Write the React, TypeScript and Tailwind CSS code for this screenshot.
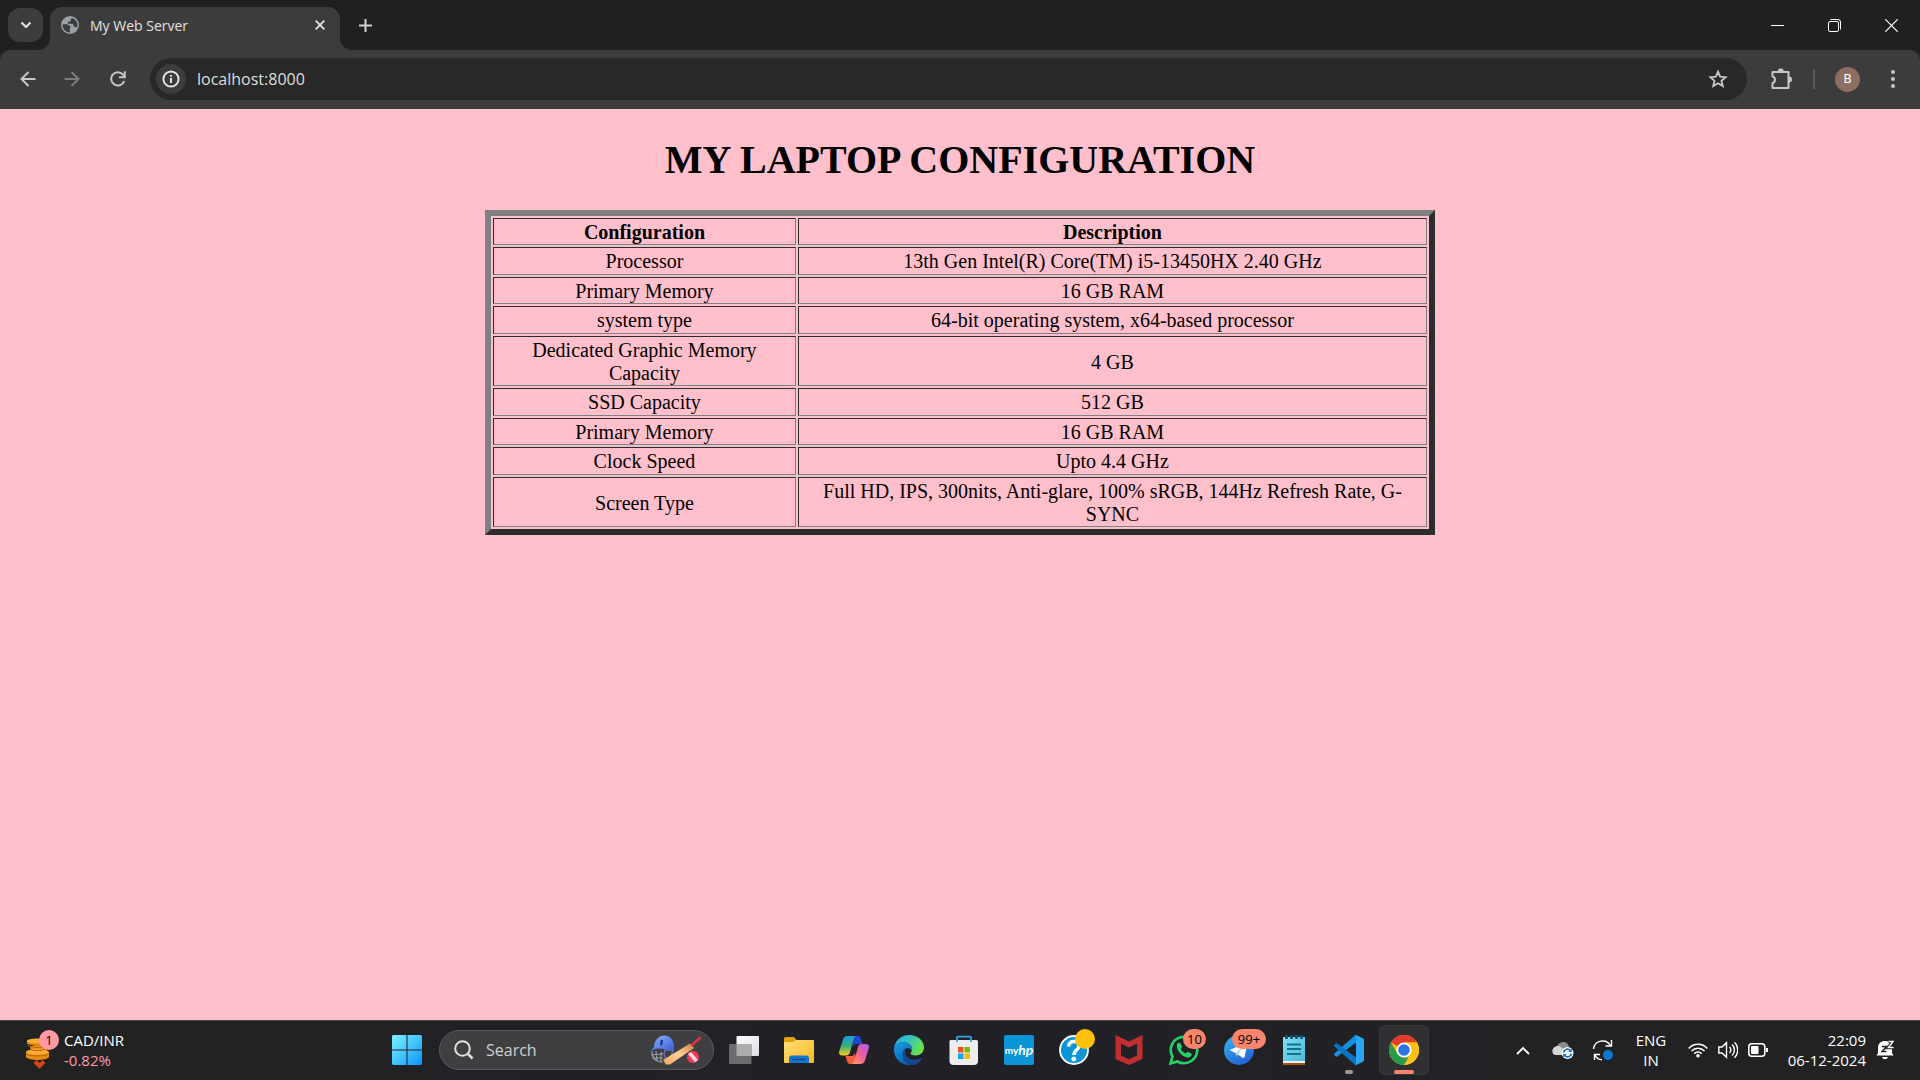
import type { ReactNode } from "react";

const rows = [
  { name: "Processor", value: "13th Gen Intel(R) Core(TM) i5-13450HX 2.40 GHz", tall: true },
  { name: "Primary Memory", value: "16 GB RAM", tall: false },
  { name: "system type", value: "64-bit operating system, x64-based processor", tall: true },
  { name: "Dedicated Graphic Memory Capacity", value: "4 GB", tall: false },
  { name: "SSD Capacity", value: "512 GB", tall: true },
  { name: "Primary Memory", value: "16 GB RAM", tall: false },
  { name: "Clock Speed", value: "Upto 4.4 GHz", tall: true },
  { name: "Screen Type", value: "Full HD, IPS, 300nits, Anti-glare, 100% sRGB, 144Hz Refresh Rate, G-SYNC", tall: false },
];

const cellBorder = "border border-t-[#2c2c2c] border-l-[#2c2c2c] border-r-[#808080] border-b-[#808080] px-[2px]";
const shortCell = `${cellBorder} pt-[2px]`;
const tallCell = `${cellBorder} py-px`;

function TabStrip() {
  return (
    <div className="flex h-[50px] items-start bg-[#1f2020] pl-2">
      <button aria-label="Search tabs" className="mt-2 flex h-[34px] w-[35px] items-center justify-center rounded-xl bg-[#3c3c3c]">
        <svg width="12" height="8" viewBox="0 0 12 8" fill="none" stroke="#e3e3e3" strokeWidth="2">
          <path d="M1.5 1.5 6 6l4.5-4.5" />
        </svg>
      </button>
      <div className="relative ml-[7px] flex h-[43px] w-[290px] items-start self-end rounded-t-xl bg-[#3c3c3c] px-[11px] pt-[9px]">
        <svg className="absolute bottom-0 -left-3" width="12" height="12" viewBox="0 0 12 12">
          <path d="M12 0v12H0A12 12 0 0 0 12 0z" fill="#3c3c3c" />
        </svg>
        <svg className="absolute -right-3 bottom-0" width="12" height="12" viewBox="0 0 12 12">
          <path d="M0 0v12h12A12 12 0 0 1 0 0z" fill="#3c3c3c" />
        </svg>
        <svg width="18" height="18" viewBox="0 0 18 18">
          <circle cx="9" cy="9" r="9" fill="#9aa0a6" />
          <path d="M11 1.9 9.8 3.2c-.3.4-.2.8 0 1.2.2.5-.1 1-.7 1.1l-1.6.2c-.5.1-.8.5-.8 1 0 .6.4 1 1 1h3c1.4 0 2 1 2 2v1.1h1.4c.8 0 1.5.4 1.800 1.100A7.500 7.500 0 0 0 11 1.900z" fill="#3c3c3c" />
          <path d="M1.500 8.200h4.700l3.200 2c.5.4.4 1.800-.6 1.800v3l.6 1.500A7.500 7.500 0 0 1 1.500 8.200z" fill="#3c3c3c" />
        </svg>
        <span className="ml-[11px] grow text-sm leading-5 text-[#e3e3e3]">My Web Server</span>
        <button aria-label="Close tab" className="flex size-[18px] items-center justify-center">
          <svg width="10" height="10" viewBox="0 0 10 10" stroke="#e3e3e3" strokeWidth="1.8">
            <path d="m.7.7 8.600 8.600M9.300.7.7 9.300" />
          </svg>
        </button>
      </div>
      <button aria-label="New tab" className="ml-[7px] flex h-[50px] w-9 items-center justify-center">
        <svg width="13" height="13" viewBox="0 0 13 13" stroke="#d0d0d0" strokeWidth="2">
          <path d="M6.500 0v13M0 6.500h13" />
        </svg>
      </button>
      <div className="ml-auto flex h-[50px]">
        <button aria-label="Minimize" className="flex w-[57px] items-center justify-center">
          <svg width="13" height="13" viewBox="0 0 13 13" stroke="#fff"><path d="M0 6.500h13" /></svg>
        </button>
        <button aria-label="Restore" className="flex w-[57px] items-center justify-center">
          <svg width="13" height="13" viewBox="0 0 13 13" fill="none" stroke="#fff">
            <rect x=".5" y="2.500" width="10" height="10" rx="1.500" />
            <path d="M2.500.5H10A2.500 2.500 0 0 1 12.500 3v7.500" />
          </svg>
        </button>
        <button aria-label="Close" className="flex w-[57px] items-center justify-center">
          <svg width="13" height="13" viewBox="0 0 13 13" stroke="#fff" strokeWidth="1.2"><path d="m.3.3 12.400 12.400M12.700.3.3 12.700" /></svg>
        </button>
      </div>
    </div>
  );
}

function Toolbar() {
  return (
    <div className="bg-[#1f2020]">
      <div className="flex h-[59px] items-center rounded-t-[10px] bg-[#3c3c3c] pr-[17px] pb-px pl-[6px]">
        <button aria-label="Back" className="flex w-11 justify-center">
          <svg width="16" height="16" viewBox="0 0 16 16" fill="none" stroke="#c7c7c7" strokeWidth="2"><path d="M15.500 8H2M8.500 1 1.500 8l7 7" /></svg>
        </button>
        <button aria-label="Forward" className="flex w-11 justify-center">
          <svg width="16" height="16" viewBox="0 0 16 16" fill="none" stroke="#7c7c7c" strokeWidth="2"><path d="M.5 8H14M7.500 1l7 7-7 7" /></svg>
        </button>
        <button aria-label="Reload" className="flex w-[47px] justify-center">
          <svg width="16" height="16" viewBox="0 0 16 16" fill="none" stroke="#c7c7c7" strokeWidth="2">
            <path d="M14.200 10.200A6.700 6.700 0 1 1 12.900 3.400L14.500 5.500" />
            <path d="M14.800.3v6H9" />
          </svg>
        </button>
        <div className="ml-[9px] flex h-[42px] grow items-center rounded-full bg-[#282828] pr-[18px] pl-[6px]">
          <button aria-label="View site information" className="flex size-[30px] items-center justify-center rounded-full bg-[#3c3c3c]">
            <svg width="18" height="18" viewBox="0 0 18 18" fill="none" stroke="#e3e3e3" strokeWidth="2">
              <circle cx="9" cy="9" r="7.600" />
              <path d="M9 8v5M9 5v1.800" />
            </svg>
          </button>
          <input aria-label="Address" defaultValue="localhost:8000" className="ml-[11px] h-8 min-w-0 grow bg-transparent text-base text-[#dedede] outline-none" />
          <button aria-label="Bookmark this tab">
            <svg width="22" height="22" viewBox="0 0 24 24" fill="none" stroke="#c7c7c7" strokeWidth="2">
              <path d="m12 4 2.300 5.500 6 .5-4.500 3.900 1.400 5.800-5.200-3.100-5.200 3.100 1.400-5.800L3.700 10l6-.5z" />
            </svg>
          </button>
        </div>
        <button aria-label="Extensions" className="ml-[22px]">
          <svg width="24" height="24" viewBox="0 0 24 24" fill="none">
            <path d="M4 5h15.500v16H3.500v-4.800c3.300-1.200 3.300-5.700 0-6.900V5z" stroke="#c7c7c7" strokeWidth="2" strokeLinejoin="round" />
            <path d="M9 4.500a2.700 2.700 0 0 1 5.400 0zM20 9.800a2.700 2.700 0 0 1 0 5.400z" fill="#c7c7c7" stroke="#c7c7c7" />
          </svg>
        </button>
        <div className="ml-5 h-5 w-[2px] bg-[#5c5c5c]" />
        <button aria-label="Profile" className="ml-5 flex size-[25px] items-center justify-center rounded-full bg-[#8d6e63] font-['Roboto'] text-[13px] text-white">B</button>
        <button aria-label="Menu" className="ml-[22px] flex w-[21px] justify-center">
          <svg width="4" height="18" viewBox="0 0 4 18" fill="#c7c7c7">
            <circle cx="2" cy="2" r="2" /><circle cx="2" cy="9" r="2" /><circle cx="2" cy="16" r="2" />
          </svg>
        </button>
      </div>
    </div>
  );
}

function ConfigPage() {
  return (
    <main className="grow bg-[#ffc0cb] px-[10px] font-['Liberation_Serif',serif] text-xl leading-[23px] text-black">
      <h1 className="pt-7 text-center text-[40px] leading-[46px] font-bold">MY LAPTOP CONFIGURATION</h1>
      <table className="mx-auto mt-[27px] w-1/2 table-fixed border-separate border-spacing-[2px] border-[6px] border-t-[#808080] border-r-[#2c2c2c] border-b-[#2c2c2c] border-l-[#808080] text-center">
        <thead>
          <tr>
            <th className={`${shortCell} w-[32.5%]`}>Configuration</th>
            <th className={shortCell}>Description</th>
          </tr>
        </thead>
        <tbody>
          {rows.map((row, i) => (
            <tr key={i} className={row.tall ? "h-7" : "h-[27px]"}>
              <td className={row.tall ? tallCell : shortCell}>{row.name}</td>
              <td className={row.tall ? tallCell : shortCell}>{row.value}</td>
            </tr>
          ))}
        </tbody>
      </table>
    </main>
  );
}

function TaskButton({ label, children, badge, active, dot }: { label: string; children: ReactNode; badge?: ReactNode; active?: boolean; dot?: boolean }) {
  return (
    <button
      aria-label={label}
      className={`relative flex size-[50px] shrink-0 items-center justify-center rounded-md border ${active ? "border-[#39393c] bg-[#303033]" : "border-transparent"}`}
    >
      {children}
      {badge}
      {dot && <span className="absolute bottom-0 h-1 w-2 rounded-full bg-[#9a9a9a]" />}
      {active && <span className="absolute bottom-0 h-1 w-5 rounded-full bg-[#f7856c]" />}
    </button>
  );
}

function CricketArt() {
  return (
    <svg width="52" height="32" viewBox="0 0 52 32" fill="none">
      <defs>
        <linearGradient id="helmet" x1="0" y1="0" x2="1" y2="1"><stop stopColor="#8ab0fa" /><stop offset="1" stopColor="#3a5bd8" /></linearGradient>
        <linearGradient id="bat" x1="0" y1="1" x2="1" y2="0"><stop stopColor="#f4a556" /><stop offset=".5" stopColor="#ffd09a" /><stop offset="1" stopColor="#d08040" /></linearGradient>
      </defs>
      <path d="M3 17c0 7 4 11 11 11M2 21l12-1M3 24l11 0M7 17l1 10M12 18v9" stroke="#9a9ca8" strokeWidth="1.2" />
      <path d="M16 16h8l-2 7-5 3-2-6z" stroke="#6a70b8" strokeWidth="1.5" />
      <path d="M5 14C5 6 10 1 16 1.500c6 .5 10 6 9 14h-9c-4-1.500-9-1.500-13 1-1 0-.5-2 2-2.500z" fill="url(#helmet)" />
      <path d="m13 6-1 5" stroke="#1b2b6b" strokeWidth="2" />
      <path d="M41 9.500 45 14 21 30.500l-4 0L14 26z" fill="url(#bat)" />
      <path d="m43 11 8-7" stroke="#e0304a" strokeWidth="2.5" strokeLinecap="round" />
      <circle cx="44" cy="23" r="6" fill="#f23a5a" />
      <path d="m39 20 7 8 3-2-7-8z" fill="#ffd9dc" />
    </svg>
  );
}

function Taskbar() {
  return (
    <footer className="flex h-[60px] shrink-0 items-center border-t border-[#454547] bg-linear-to-r from-[#222222] via-[#212027] to-[#222222] pb-px text-white">
      <button className="flex w-[380px] shrink-0 items-center pl-[25px] text-left">
        <span className="relative h-[38px] w-[34px] shrink-0">
          <svg width="34" height="38" viewBox="0 0 34 38">
            <path d="M2 9.500h20v6H12L2 13z" fill="#e08410" />
            <ellipse cx="12" cy="10" rx="10" ry="2.500" fill="#ffae38" />
            <path d="M5 15h17v4c-5 2.500-12 2.500-16 0z" fill="#ee9318" />
            <path d="M1 21h23v5c-2 4-21 4-23 0z" fill="#e68a12" />
            <ellipse cx="12.500" cy="21" rx="11.500" ry="2.800" fill="#ffac30" />
            <path d="M3 14.500c5 2.500 13 2.500 18 1M5 18.500c5 1.500 11 1.500 16-.5M1.500 23c4 2.500 18 2.500 22 0" stroke="#b8650a" fill="none" />
            <path d="M10 30.500 14.500 35l4.500-4.500" stroke="#d64518" strokeWidth="4" fill="none" />
          </svg>
          <span className="absolute -top-px left-[14px] flex size-5 items-center justify-center rounded-full bg-[#ff99a4] text-[13px] leading-5 text-black">1</span>
        </span>
        <span className="ml-[5px] flex flex-col text-[15px] leading-5">
          <span>CAD/INR</span>
          <span className="text-[#ff99a4]">-0.82%</span>
        </span>
      </button>

      <div className="flex items-center gap-[5px]">
        <button aria-label="Start" className="flex w-[54px] justify-center">
          <svg width="30" height="30" viewBox="0 0 29 29">
            <defs><linearGradient id="win" gradientUnits="userSpaceOnUse" x1="0" y1="0" x2="29" y2="29"><stop stopColor="#7df3ff" /><stop offset="1" stopColor="#0a95fb" /></linearGradient></defs>
            <path d="M1 0h13v14H0V1zM15 0h13l1 1v13H15zM0 15h14v14H1l-1-1zM15 15h14v13l-1 1H15z" fill="url(#win)" />
          </svg>
        </button>
        <label className="flex h-10 w-[275px] items-center rounded-full border border-[#58585b] bg-[#3f3f42] pr-[12px] pl-[14px]">
          <svg className="shrink-0" width="20" height="20" viewBox="0 0 20 20" fill="none" stroke="#e0e0e0" strokeWidth="2">
            <circle cx="8.500" cy="8.500" r="7.300" />
            <path d="m14 14 4.500 4.500" strokeWidth="2.5" />
          </svg>
          <input placeholder="Search" aria-label="Search" className="ml-3 min-w-0 grow bg-transparent text-base text-[#cfcfcf] outline-none placeholder:text-[#cfcfcf]" />
          <span className="shrink-0"><CricketArt /></span>
        </label>
        <TaskButton label="Task view">
          <svg width="30" height="30" viewBox="0 0 30 30">
            <defs><linearGradient id="tv" x1="0" y1="0" x2="1" y2="1"><stop stopColor="#fff" /><stop offset="1" stopColor="#dcdcdc" /></linearGradient></defs>
            <rect x="7.500" y="1" width="22.500" height="20" rx="1" fill="url(#tv)" />
            <rect x="0" y="9" width="22.500" height="20" rx="1" fill="#6c6c6c" />
            <path d="M7.500 9h15v12h-15z" fill="#adadad" />
          </svg>
        </TaskButton>
        <TaskButton label="File Explorer">
          <svg width="30" height="30" viewBox="0 0 30 30">
            <defs><linearGradient id="fold" x1="0" y1="0" x2="1" y2="1"><stop stopColor="#ffe07a" /><stop offset="1" stopColor="#fbb81f" /></linearGradient></defs>
            <path d="M0 3.500A1.500 1.500 0 0 1 1.500 2H10l3 3.500V9H0z" fill="#e2a00d" />
            <path d="M0 7h9l3-2h17q1 0 1 1v21q0 1-1 1H1q-1 0-1-1z" fill="url(#fold)" />
            <path d="M5 28v-5q0-2.500 2.500-2.500h15q2.500 0 2.500 2.500v5z" fill="#1277cf" />
            <path d="M8.500 24.500h13" stroke="#0a4a8c" strokeWidth="1.5" />
          </svg>
        </TaskButton>
        <TaskButton label="Copilot">
          <svg width="30" height="30" viewBox="0 0 30 30">
            <defs>
              <linearGradient id="cpa" x1="0" y1="0" x2="0" y2="1"><stop stopColor="#1a9be8" /><stop offset=".5" stopColor="#37ad7c" /><stop offset="1" stopColor="#f4cf1b" /></linearGradient>
              <linearGradient id="cpb" x1="1" y1="0" x2="0" y2="1"><stop stopColor="#a65cf0" /><stop offset=".5" stopColor="#f0609a" /><stop offset="1" stopColor="#ffa25c" /></linearGradient>
            </defs>
            <path d="M13 1h6c2 0 2.500 1.500 3 3l1.500 5H18c-3 0-3.500 2-4 4z" fill="#1b46d2" />
            <path d="M17 29h-6c-2 0-2.500-1.500-3-3l-1.500-5H12c3 0 3.500-2 4-4z" fill="#f2603f" />
            <path d="M8.500 1H18c-2 0-2.800 1.500-3.300 3.300L11 17c-.6 2-1.500 3.500-4 3.500H3c-2.500 0-3.500-2-2.700-4.500L4 4.500C4.700 2.500 6 1 8.500 1z" fill="url(#cpa)" />
            <path d="M21.500 29H12c2 0 2.800-1.500 3.300-3.300L19 12c.6-2 1.500-3 4-3h4c2.500 0 3.500 2 2.700 4.500L26 25.500c-.7 2-2 3.500-4.500 3.500z" fill="url(#cpb)" />
          </svg>
        </TaskButton>
        <TaskButton label="Edge">
          <svg width="30" height="30" viewBox="0 0 30 30">
            <defs>
              <linearGradient id="ea" x1="0" y1="0" x2="1" y2=".4"><stop stopColor="#2aa9e6" /><stop offset=".5" stopColor="#33c3c0" /><stop offset="1" stopColor="#6ae04e" /></linearGradient>
              <linearGradient id="eb" x1="0" y1="0" x2=".6" y2="1"><stop stopColor="#1ba0e2" /><stop offset="1" stopColor="#0b5cb4" /></linearGradient>
            </defs>
            <path d="M0 14C.5 6 7 0 15 0c9 0 15 6 15 12.500 0 5-4 8-8.500 8-3.500 0-5-1.200-5-2.200 0-.8 1.500-1.300 1.500-4 0-4-4-7-9-7-5 0-8.500 3-9 6.700z" fill="url(#ea)" />
            <path d="M0 14c.5-4 4-6.700 9-6.700s9 3 9 6.500c0 .8-.2 1.500-.5 2.200-.6-2-2-3-4-3-2.500 0-4.500 3-4.500 6.500 0 6 5 10 10 10-1.300.4-2.600.5-4 .5C6.700 30 0 23.300 0 15z" fill="url(#eb)" />
            <path d="M13 12.500c-2 2-2.500 4-1.500 6.500 1.300 4 5.500 5.800 9.500 5.800 2.500 0 4.800-.8 6-1.500.7-.3 1 .2.700.7C25.500 27.500 21.500 30 18 30c-5.500 0-9.500-4.500-9.500-10 0-3.500 1.700-6.500 4.500-7.500z" fill="#114a93" />
          </svg>
        </TaskButton>
        <TaskButton label="Microsoft Store">
          <svg width="30" height="30" viewBox="0 0 30 30">
            <path d="M1.500 5h26q1.500 0 1.500 1.500V26q0 4-4 4H4.500q-4 0-4-4V6.500Q.5 5 1.500 5z" fill="#eeeeef" />
            <path d="M8 7V2.500q0-.8.800-.8h12.400q.8 0 .8.800V7" stroke="#29a9ec" strokeWidth="1.8" fill="none" />
            <path d="M9 12h5.500v5.500H9z" fill="#f25022" /><path d="M15.500 12H21v5.500h-5.500z" fill="#7fba00" />
            <path d="M9 18.500h5.500V24H9z" fill="#00a4ef" /><path d="M15.500 18.500H21V24h-5.500z" fill="#ffb900" />
          </svg>
        </TaskButton>
        <TaskButton label="myHP">
          <span className="flex size-[30px] items-center justify-center rounded-xs bg-[#0a96d6] font-['Lato'] leading-none">
            <span className="text-[10px] font-bold">my</span>
            <span className="text-[14px] font-bold italic">hp</span>
          </span>
        </TaskButton>
        <TaskButton label="HP Support Assistant" badge={<span className="absolute top-[3px] right-[3px] size-5 rounded-full bg-[#ffbf0b]" />}>
          <svg width="30" height="30" viewBox="0 0 30 30" fill="none" stroke="#fff">
            <circle cx="15" cy="15" r="14" fill="#0a96d6" strokeWidth="1.8" />
            <path d="M9.500 11.500C10 7.500 13 6 16 6.500c4 .7 5 5 2.500 7.500-2 1.800-3.500 2.500-3.500 6" strokeWidth="3.5" />
            <circle cx="14.800" cy="24" r="2" fill="#fff" />
          </svg>
        </TaskButton>
        <TaskButton label="McAfee">
          <svg width="28" height="30" viewBox="0 0 28 30">
            <path d="m.5 0 13.500 6.500L27.500 0v24L14 30 .5 24zM6 8.500v12l8 3.800 8-3.800v-12l-8 4z" fill="#c12e2f" fillRule="evenodd" />
          </svg>
        </TaskButton>
        <TaskButton label="WhatsApp" badge={<span className="absolute top-[3px] left-[23px] flex h-5 w-[23px] items-center justify-center rounded-full bg-[#f7856c] text-[13px] leading-5 text-black">10</span>}>
          <svg width="30" height="30" viewBox="0 0 30 30">
            <path d="M1.500 28.500 3.500 21.500A13.200 13.200 0 1 1 8.500 26.500z" fill="none" stroke="#25d366" strokeWidth="2.6" />
            <path d="M8 9.500c.5-1.500 2.500-2.300 3.300-1.200l1.600 3c.3.700-.1 1.300-1.300 2.600 1.200 2.200 3 3.700 5.300 4.600 1.300-1.600 1.700-2 2.500-1.600l2.900 1.500c.8.500.4 2.300-.6 3.100-1.700 1.400-4 1-6.400 0C11.500 19.700 7 14 8 9.500z" fill="#25d366" />
          </svg>
        </TaskButton>
        <TaskButton label="Telegram" badge={<span className="absolute top-[3px] left-[17px] flex h-5 w-[34px] items-center justify-center rounded-full bg-[#f7856c] text-[13px] leading-5 text-black">99+</span>}>
          <svg width="30" height="30" viewBox="0 0 30 30">
            <defs><linearGradient id="tg" x1="0" y1="0" x2=".6" y2="1"><stop stopColor="#34b8f5" /><stop offset="1" stopColor="#2364d8" /></linearGradient></defs>
            <circle cx="15" cy="15" r="15" fill="url(#tg)" />
            <path d="M5.500 15 22 8c1-.4 1.500.2 1.300 1.200L20.500 22c-.2 1-1 1.200-1.800.7L11.500 18z" fill="#fff" />
            <path d="m11.500 18 8.500-7-6.500 8.500-.7 2.500z" fill="#b5d4f3" />
          </svg>
        </TaskButton>
        <TaskButton label="Notepad">
          <svg width="22" height="30" viewBox="0 0 22 30">
            <defs><linearGradient id="np" x1="0" y1="0" x2="1" y2="1"><stop stopColor="#83dff2" /><stop offset="1" stopColor="#4cb9da" /></linearGradient></defs>
            <path d="M0 27h22v3H0z" fill="#a5530c" /><path d="M0 25h22v3H0z" fill="#f2f2f2" />
            <path d="M0 2h22v24H0z" fill="url(#np)" />
            <path d="M3.500 0v4M8.500 0v4M13.500 0v4M18.500 0v4" stroke="#0b5876" strokeWidth="2.8" />
            <path d="M4 9.500h14M4 14h14M4 19h14" stroke="#126f91" strokeWidth="1.8" />
          </svg>
        </TaskButton>
        <TaskButton label="Visual Studio Code" dot>
          <svg width="30" height="30" viewBox="0 0 30 30">
            <path d="M22 7.500 3.300 21.500q-.8.500-1.500-.1L.4 20q-.7-.8 0-1.500L20.500.7Q21 0 22 0z" fill="#1490df" />
            <path d="M22 22.500 3.300 8.500q-.8-.5-1.500.1L.4 10q-.7.800 0 1.500l20.100 17.800q.5.700 1.500.7z" fill="#0b75c4" />
            <path d="m22 0 7 3.300q1 .5 1 1.700v20q0 1.200-1 1.700L22 30q-.8 0-1.500-.7 1.500.5 1.500-1V1.700q0-1.500-1.500-1Q21 0 22 0z" fill="#2aa4f4" />
          </svg>
        </TaskButton>
        <TaskButton label="Google Chrome" active>
          <svg width="30" height="30" viewBox="0 0 30 30">
            <circle cx="15" cy="15" r="15" fill="#fbc116" />
            <path d="M15 15 2 7.500A15 15 0 0 1 28 7.500H15z" fill="#e33b2e" />
            <path d="M2 7.500 8.500 19 15 22.500h6.500L15 30A15 15 0 0 1 2 7.500z" fill="#2a9b4c" />
            <path d="M21.500 18.800 15 30A15 15 0 0 0 28 7.500H15z" fill="#fbc116" />
            <circle cx="15" cy="15" r="7.500" fill="#fff" /><circle cx="15" cy="15" r="5.800" fill="#2b74e4" />
          </svg>
        </TaskButton>
      </div>

      <div className="ml-auto flex items-center pr-6">
        <button aria-label="Show hidden icons" className="flex w-10 justify-center">
          <svg width="14" height="9" viewBox="0 0 14 9" fill="none" stroke="#fff" strokeWidth="1.8"><path d="m1 8 6-6 6 6" /></svg>
        </button>
        <button aria-label="OneDrive" className="flex w-10 justify-center">
          <svg width="22" height="20" viewBox="0 0 22 20">
            <path d="M5 7c1-4 4-5 7-5 3 0 5 3 5 6l-7 7z" fill="#8a8a8a" />
            <path d="M5 6c3-.5 4 1 5.500 2.500 2 0 3 1 3 3S12 15 10 15H4C-1 15-1 7 5 6z" fill="#d5d5d5" />
            <circle cx="15.500" cy="13" r="6" fill="#fff" />
            <path d="M11.500 12.500a4 4 0 0 1 7-2M19.500 13.500a4 4 0 0 1-7 2" stroke="#1471c9" strokeWidth="1.7" fill="none" />
            <path d="M19.800 8.500v3.500h-3.500zM11.200 17.500V14h3.500z" fill="#1471c9" />
          </svg>
        </button>
        <button aria-label="Windows Update" className="flex w-10 justify-center">
          <svg width="22" height="22" viewBox="0 0 22 22" fill="none" stroke="#fff" strokeWidth="1.4">
            <path d="M1.500 10a9 9 0 0 1 17-3M19.500 1v6h-6M8 15.500H2.500V21M3 16C4 18.500 6 20.500 10 20.700" />
            <circle cx="16" cy="16" r="5" fill="#0a78d4" stroke="none" />
          </svg>
        </button>
        <button aria-label="Input language" className="flex w-[56px] flex-col items-center text-[15px] leading-5">
          <span>ENG</span><span>IN</span>
        </button>
        <button aria-label="Network, volume and battery" className="ml-1 flex items-center">
          <span className="flex w-[30px] justify-center">
            <svg width="20" height="16" viewBox="0 0 20 16" fill="none" stroke="#fff" strokeWidth="1.5">
              <path d="M.7 6.500a12.500 12.500 0 0 1 18.600 0M3.500 9a9 9 0 0 1 13 0M6.300 11.600a5.300 5.300 0 0 1 7.400 0" />
              <circle cx="10" cy="13.800" r="1.800" fill="#fff" stroke="none" />
            </svg>
          </span>
          <span className="flex w-[30px] justify-center">
            <svg width="20" height="18" viewBox="0 0 20 18" fill="none" stroke="#fff" strokeWidth="1.4">
              <path d="M.8 6H4l4.500-4.300v14.600L4 12H.8zM11.500 6a4 4 0 0 1 0 6M14 3.500a7.500 7.500 0 0 1 0 11M16.500 1.200a11 11 0 0 1 0 15.600" />
            </svg>
          </span>
          <span className="flex w-[30px] justify-center">
            <svg width="20" height="14" viewBox="0 0 20 14" fill="none" stroke="#fff" strokeWidth="1.6">
              <rect x=".8" y=".8" width="16" height="12.400" rx="3" />
              <rect x="3" y="3" width="7.500" height="8" rx="1" fill="#fff" stroke="none" />
              <path d="M19 5v4" strokeWidth="2" />
            </svg>
          </span>
        </button>
        <button aria-label="Clock and notifications" className="ml-[15px] flex items-center">
          <span className="flex w-[78px] flex-col items-end text-[15px] leading-5 whitespace-nowrap">
            <span>22:09</span><span>06-12-2024</span>
          </span>
          <svg className="ml-[10px]" width="20" height="20" viewBox="0 0 20 20">
            <path d="M2 8C2 3.500 5 1 9 1s7 2.500 7 7v5l1.500 2.500H.5L2 13zM6 17h6c-1 3-5 3-6 0z" fill="#fff" />
            <path d="M6 6.500h4.500L6 11.500h4.500" stroke="#202125" strokeWidth="1.4" fill="none" />
            <path d="M12.500 1.500h4.500L12.500 7.500h5" stroke="#202125" strokeWidth="3.5" fill="none" />
            <path d="M12.500 1.500h4.500L12.500 7.500h5" stroke="#fff" strokeWidth="1.4" fill="none" />
          </svg>
        </button>
      </div>
    </footer>
  );
}

export default function App() {
  return (
    <div className="flex min-h-screen flex-col font-['Open_Sans','Noto_Sans',sans-serif]">
      <header>
        <TabStrip />
        <Toolbar />
      </header>
      <ConfigPage />
      <Taskbar />
    </div>
  );
}
